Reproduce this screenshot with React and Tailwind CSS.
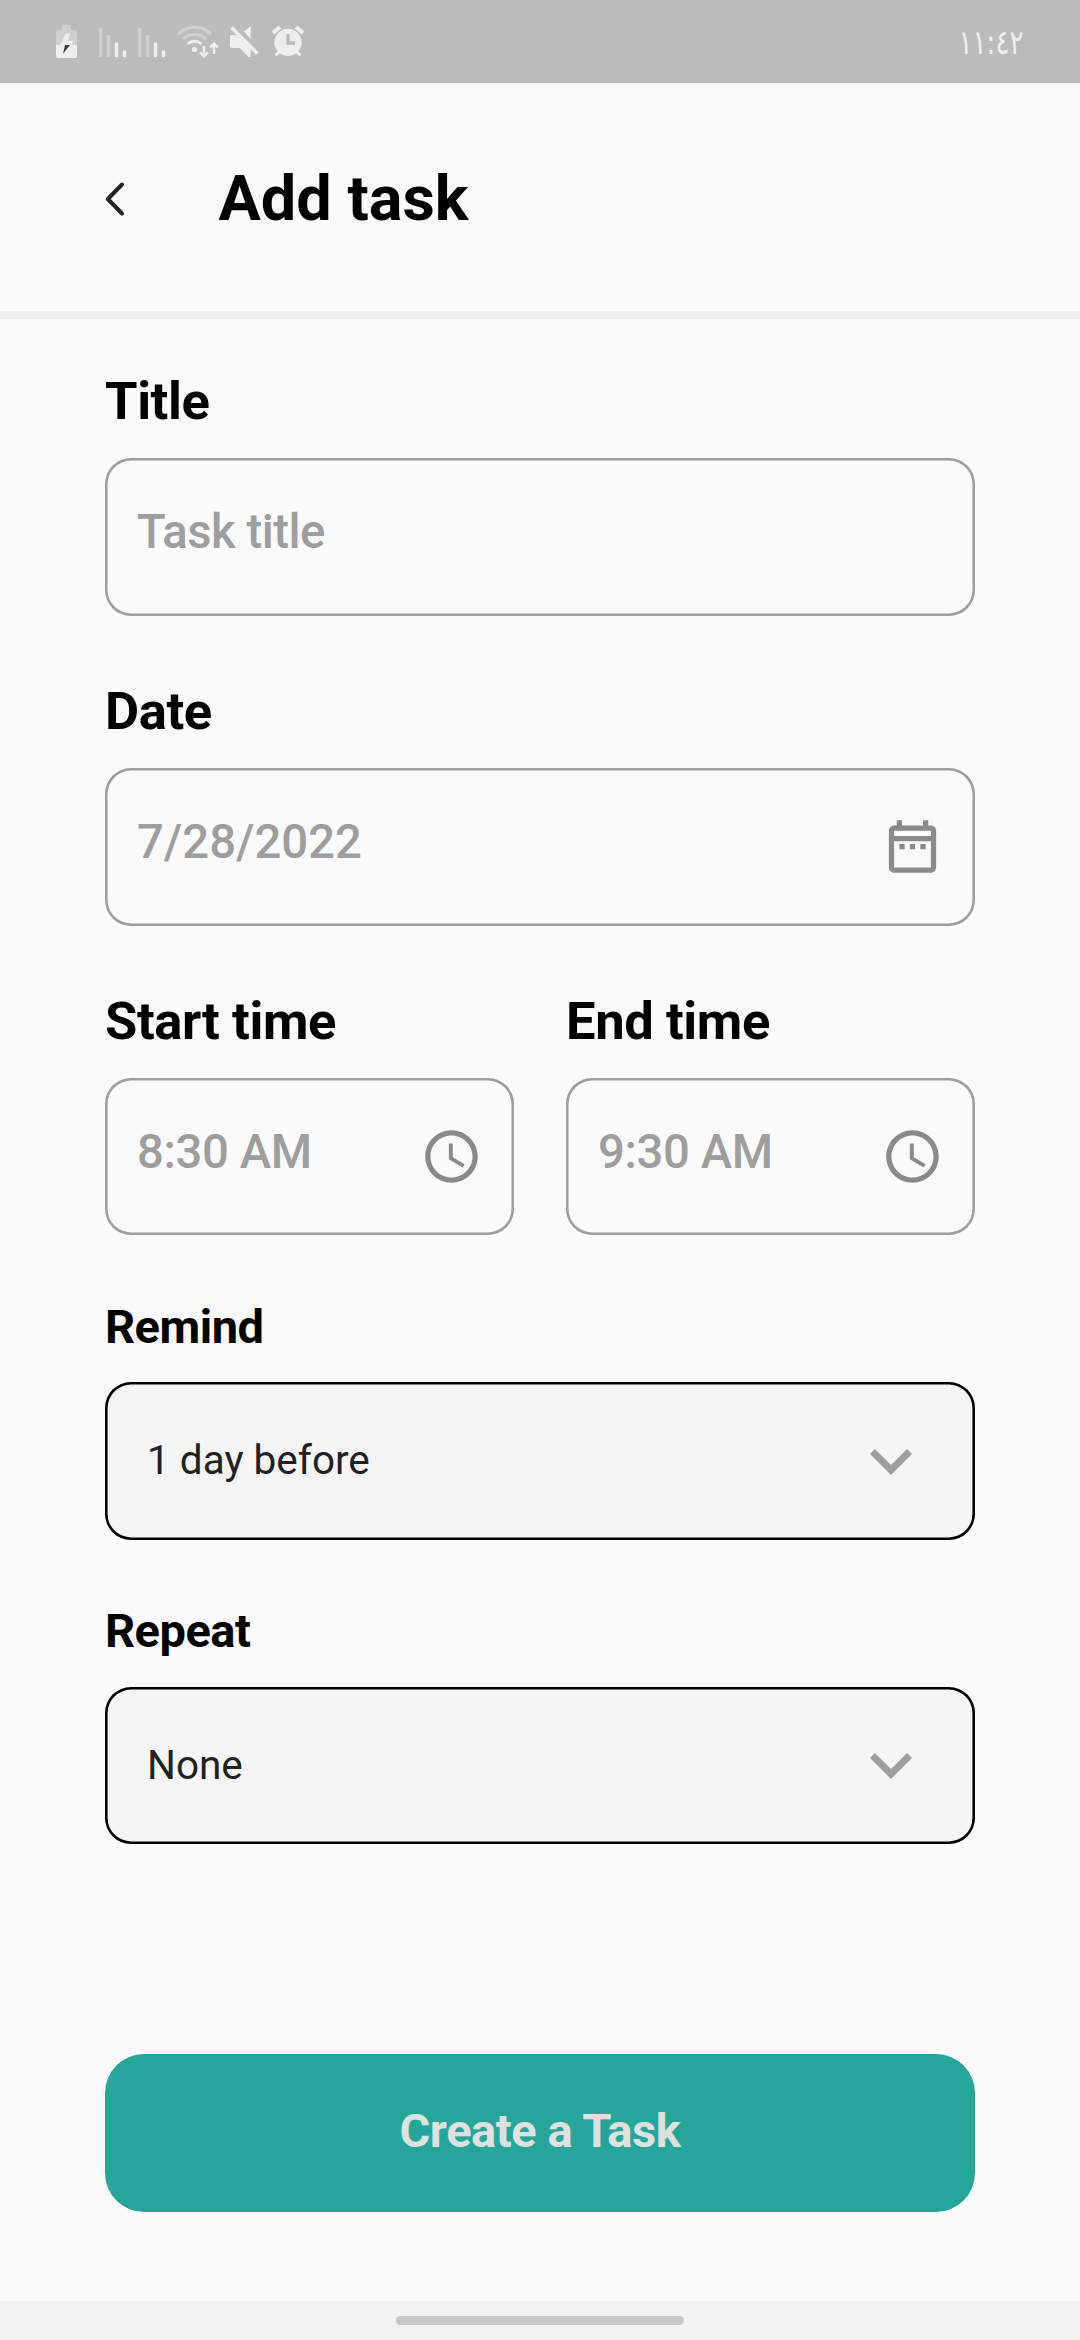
function StatusIcons() {
  return (
    <svg className="h-[83px] w-[300px]" viewBox="30 0 300 83" fill="none">
      {/* battery */}
      <path d="M62 30v-3q0-2 2-2h5q2 0 2 2v3h4q2 0 2 2v13H56V32q0-2 2-2z" fill="#cfcfcf" />
      <path d="M56 45h21v11q0 2-2 2H58q-2 0-2-2z" fill="#eeeeee" />
      <path d="M66 33.5h4l-2 7.500h5L71.500 45H60z" fill="#eeeeee" />
      <path d="M65 45h5l-7 9z" fill="#3c3c3c" />
      {/* signal bars */}
      <g strokeWidth="3.600" strokeLinecap="round">
        <path d="M100.700 29v26.500M108.500 36.500v19M139.700 29v26.500M147.600 36.500v19" stroke="#cfcfcf" />
        <path d="M116.500 44v11.500M124.500 52v3.500M155.500 44v11.500M163.500 52v3.500" stroke="#eeeeee" />
      </g>
      {/* wifi */}
      <g strokeWidth="3">
        <path d="M178 34.300a23 23 0 0 1 33 0M182.800 39.300a16.500 16.500 0 0 1 23.400 0" stroke="#cfcfcf" />
        <path d="M187.500 44a10.500 10.500 0 0 1 14 0" stroke="#eeeeee" />
      </g>
      <circle cx="194.500" cy="49.500" r="2.600" fill="#eeeeee" />
      <path d="M204 46v10M200 52.300l4 4 4-4M214 54V44M210 47.700l4-4 4 4" stroke="#eeeeee" strokeWidth="2.500" />
      {/* muted speaker */}
      <path d="M244 31.500 250.700 26v13zM230 37q0-2 2-2h6l12.700 13V57h-2l-9-9H232q-2 0-2-2z" fill="#eeeeee" />
      <path d="M231.500 27.500l26 26" stroke="#eeeeee" strokeWidth="3.600" />
      {/* alarm */}
      <circle cx="288" cy="42.300" r="13.600" fill="#eeeeee" />
      <path d="M273 33l7-6M303 33l-7-6" stroke="#eeeeee" strokeWidth="4" />
      <path d="M280 51l-4.500 4.500M296 51l4.500 4.500" stroke="#eeeeee" strokeWidth="3" />
      <path d="M288 34v9h7" stroke="#bbbbbb" strokeWidth="3.400" />
    </svg>
  );
}

function CalendarIcon() {
  return (
    <svg className="size-[63px]" viewBox="0 0 24 24" fill="#8a8a8a">
      <path d="M7 11h2v2H7v-2zm14-5v14c0 1.1-.9 2-2 2H5c-1.110 0-2-.9-2-2l.01-14c0-1.100.88-2 1.990-2h1V2h2v2h8V2h2v2h1c1.100 0 2 .9 2 2zM5 8h14V6H5v2zm14 12V10H5v10h14zm-4-7h2v-2h-2v2zm-4 0h2v-2h-2v2z" />
    </svg>
  );
}

function ClockIcon() {
  return (
    <svg className="size-[63px]" viewBox="0 0 24 24" fill="#8a8a8a">
      <path d="M11.990 2C6.470 2 2 6.480 2 12s4.470 10 9.990 10C17.520 22 22 17.520 22 12S17.520 2 11.990 2zM12 20c-4.420 0-8-3.580-8-8s3.580-8 8-8 8 3.580 8 8-3.580 8-8 8zm.5-13H11v6l5.250 3.150.75-1.230-4.500-2.670z" />
    </svg>
  );
}

function ChevronIcon() {
  return (
    <svg className="size-[84px]" viewBox="0 0 24 24" fill="#9e9e9e">
      <path d="M7.410 8.590 12 13.170l4.590-4.580L18 10l-6 6-6-6z" />
    </svg>
  );
}

function InputField({ label, value, valueClass = "tracking-[-0.4px]", icon }) {
  return (
    <div className="flex-1">
      <div className="h-[62px] text-[52.5px] leading-[62px] font-bold tracking-[-0.4px] text-black">{label}</div>
      <div className="mt-[26px] flex h-[157.5px] items-center justify-between rounded-[26px] pr-[31px] pl-[32px] shadow-[inset_0_0_0_2.6px_#9e9e9e]">
        <span className={`pb-[9px] text-[47.25px] leading-[56px] font-medium text-[#9e9e9e] ${valueClass}`}>{value}</span>
        {icon}
      </div>
    </div>
  );
}

function SelectField({ label, value }) {
  return (
    <div>
      <div className="h-[56px] text-[47px] leading-[56px] font-bold tracking-[-0.5px] text-black">{label}</div>
      <div className="mt-[27.5px] flex h-[157.5px] items-center justify-between rounded-[26px] bg-[#f5f5f5] px-[42px] shadow-[inset_0_0_0_2.6px_#000000]">
        <span className="pb-[1px] text-[40.5px] leading-[50px] text-[#212121]">{value}</span>
        <ChevronIcon />
      </div>
    </div>
  );
}

export default function App() {
  return (
    <div className="flex h-[2340px] w-[1080px] flex-col overflow-hidden bg-[#fafafa] font-['Roboto',sans-serif]">
      <div className="flex h-[83px] shrink-0 items-center justify-between bg-[#bbbbbb] pr-[56px] pl-[30px]">
        <StatusIcons />
        <span className="origin-right scale-x-[0.77] font-['DejaVu_Sans',sans-serif] text-[34px] leading-none text-[#eeeeee]">١١:٤٢</span>
      </div>

      <header className="flex h-[236px] shrink-0 items-start border-b-8 border-[#eeeeee] pt-[79px] pl-[105px]">
        <svg className="mt-[19px] h-[36px] w-[20px]" viewBox="0 0 20 36" fill="none" stroke="#212121" strokeWidth="4" strokeLinecap="round" strokeLinejoin="round">
          <path d="M17 3.500 2.800 18 17 32.500" />
        </svg>
        <h1 className="ml-[93.5px] text-[63px] leading-[74px] font-bold text-black">Add task</h1>
      </header>

      <main className="flex flex-col px-[105px] pt-[51px]">
        <InputField label="Title" value="Task title" valueClass="tracking-[-0.5px]" />
        <div className="mt-[64.5px]">
          <InputField label="Date" value="7/28/2022" valueClass="tracking-normal" icon={<CalendarIcon />} />
        </div>
        <div className="mt-[64px] flex gap-[52px]">
          <InputField label="Start time" value="8:30 AM" icon={<ClockIcon />} />
          <InputField label="End time" value="9:30 AM" icon={<ClockIcon />} />
        </div>
        <div className="mt-[63.5px] flex flex-col gap-[63.5px]">
          <SelectField label="Remind" value="1 day before" />
          <SelectField label="Repeat" value="None" />
        </div>
        <button className="mt-[210px] h-[157.5px] rounded-[39px] bg-[#26a69a] pb-[3px] text-[47px] leading-[56px] font-bold tracking-[-0.45px] text-[#e0e0e0]">
          Create a Task
        </button>
      </main>

      <div className="mt-auto flex h-[39px] shrink-0 items-center justify-center bg-[#f1f1f1]">
        <div className="h-[9px] w-[288px] rounded-full bg-[#c8c8c8]" />
      </div>
    </div>
  );
}
